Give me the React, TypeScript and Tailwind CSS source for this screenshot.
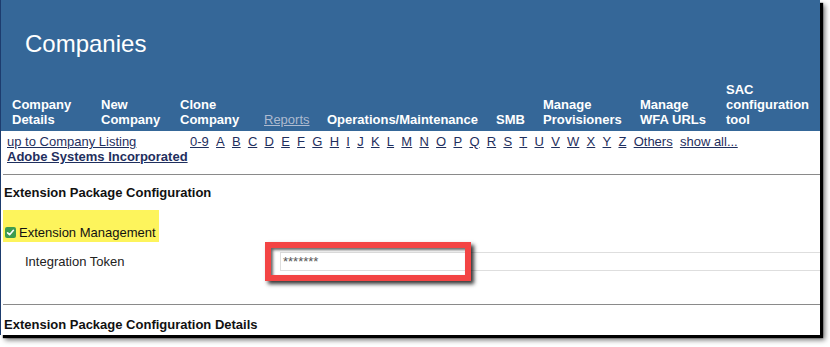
export default function App() {
  const letters = ["0-9", ..."ABCDEFGHIJKLMNOPQRSTUVWXYZ".split(""), "Others", "show all..."];
  const nav: { lines: string[]; w: string; muted?: boolean }[] = [
    { lines: ["Company", "Details"], w: "w-[89px]" },
    { lines: ["New", "Company"], w: "w-[79px]" },
    { lines: ["Clone", "Company"], w: "w-[84px]" },
    { lines: ["Reports"], w: "w-[63px]", muted: true },
    { lines: ["Operations/Maintenance"], w: "w-[169px]" },
    { lines: ["SMB"], w: "w-[47px]" },
    { lines: ["Manage", "Provisioners"], w: "w-[97px]" },
    { lines: ["Manage", "WFA URLs"], w: "w-[86px]" },
    { lines: ["SAC", "configuration", "tool"], w: "w-[94px]" },
  ];
  return (
    <div className="w-[830px] h-[347px] bg-white font-['Liberation_Sans',Arial,sans-serif] overflow-hidden">
      <div className="relative w-[820px] h-[335px] bg-white border-l border-[#1d3c6e] shadow-[3px_3px_1px_rgba(0,0,0,1),5px_5px_5px_rgba(0,0,0,0.55)] flex flex-col">
        {/* Header */}
        <div className="h-[131px] bg-[#356798] flex flex-col justify-between">
          <div className="pt-[30px] pl-[24px] text-[24px] leading-[28px] text-white">Companies</div>
          <div className="flex items-end pl-[11px] pb-[4px] text-[13px] leading-[15px] font-bold text-white">
            {nav.map((n, i) => (
              <div key={i} className={n.w + " shrink-0"}>
                {n.muted ? (
                  <span className="font-normal underline text-[#aebbd0]">{n.lines[0]}</span>
                ) : (
                  n.lines.map((l, j) => (
                    <div key={j} className="whitespace-nowrap">
                      {l}
                    </div>
                  ))
                )}
              </div>
            ))}
          </div>
        </div>

        {/* Sub navigation */}
        <div className="flex pt-[3px] pl-[6px] text-[13px] leading-[15px] text-[#1f2f5e]">
          <div className="w-[183px] shrink-0 whitespace-nowrap">
            <div className="underline">up to Company Listing</div>
            <div className="underline font-bold">Adobe Systems Incorporated</div>
          </div>
          <div className="flex gap-[7.25px] whitespace-nowrap">
            {letters.map((l) => (
              <span key={l} className="underline">
                {l}
              </span>
            ))}
          </div>
        </div>

        <div className="mt-[10px] ml-[2px] border-t border-[#8a8a8a]" />

        {/* Section */}
        <div className="pt-[10px] pl-[3px] text-[13px] leading-[15px] font-bold text-[#111]">
          Extension Package Configuration
        </div>

        <div className="mt-[10px] ml-[2px] w-[156px] h-[32px] bg-[#fdf45c] flex items-end pb-[2px] pl-[2px]">
          <div className="flex items-center h-[15px]">
            <svg width="11" height="11" viewBox="0 0 11 11" className="shrink-0">
              <rect x="0" y="0" width="11" height="11" rx="2" fill="#3d9b4f" />
              <path d="M2.6 5.8 L4.6 7.7 L8.4 3.3" stroke="#fff" strokeWidth="1.6" fill="none" strokeLinecap="round" strokeLinejoin="round" />
            </svg>
            <span className="ml-[3px] text-[13px] leading-[15px] text-[#111] whitespace-nowrap">Extension Management</span>
          </div>
        </div>

        <div className="mt-[10px] flex items-center">
          <div className="w-[279px] shrink-0 pl-[24px] text-[13px] leading-[15px] text-[#222]">Integration Token</div>
          <div className="flex-1 h-[19px] border border-[#dedede] border-r-0 pl-[2px] text-[13px] leading-[17px] text-[#555] overflow-hidden">
            *******
          </div>
        </div>

        <div className="mt-[33px] ml-[2px] border-t border-[#8a8a8a]" />

        <div className="pt-[12px] pl-[3px] text-[13px] leading-[15px] font-bold text-[#111]">
          Extension Package Configuration Details
        </div>

        {/* Red annotation box */}
        <div className="absolute left-[264px] top-[242px] w-[206px] h-[39px] border-[6px] border-[#f34444] shadow-[3px_3px_4px_rgba(0,0,0,0.8),inset_2px_2px_3px_rgba(0,0,0,0.6)]" />
      </div>
    </div>
  );
}
